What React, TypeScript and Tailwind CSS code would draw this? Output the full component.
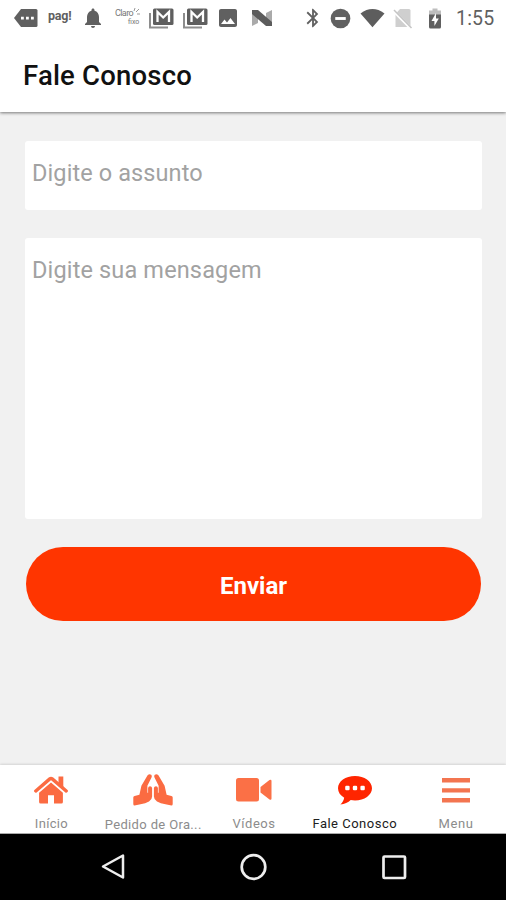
import React from "react";
import { MdBluetooth, MdNotifications, MdImage } from "react-icons/md";

function GmailIcon() {
  return (
    <svg width="25" height="21" viewBox="0 0 25 21" className="shrink-0">
      <path d="M1 5V19.5H19" fill="none" stroke="#8d8d8d" strokeWidth="2" />
      <rect x="4" y="0.5" width="20.5" height="16.5" rx="1.5" fill="#5f5f5f" />
      <path d="M8.5 14V4L14.2 9.5L20 4V14" fill="none" stroke="#fff" strokeWidth="2.3" />
    </svg>
  );
}

function StatusBar() {
  return (
    <div className="flex h-9 shrink-0 items-center pl-[14px] text-[#606060]">
      <svg width="24" height="20" viewBox="0 0 24 20" className="shrink-0">
        <path d="M7 1H22Q23.5 1 23.5 2.5V17.5Q23.5 19 22 19H7L0 10Z" fill="#606060" />
        <path d="M7 8.8h2.8v2.8H7zM12 8.8h2.8v2.8H12zM17 8.8h2.8v2.8H17z" fill="#fff" />
      </svg>
      <span className="-mt-1 ml-[10px] w-[25px] whitespace-nowrap text-[12.5px] leading-none font-bold tracking-[-0.2px]">pag!</span>
      <MdNotifications className="ml-[8px] h-6 w-6 shrink-0 text-[#606060]" />
      <div className="relative ml-[10px] h-5 w-[26px] shrink-0 text-[#777]">
        <span className="absolute top-[1px] left-0 text-[9px] leading-none tracking-[-0.6px]">Claro</span>
        <span className="absolute top-[11px] left-[13px] text-[7px] leading-none">fixo</span>
        <svg width="8" height="8" viewBox="0 0 8 8" className="absolute top-0 left-[18px]">
          <path d="M1 3L2 0M3 4L6 1M4 6H7" stroke="#999" fill="none" />
        </svg>
      </div>
      <div className="ml-[8px] flex gap-[9px]">
        <GmailIcon />
        <GmailIcon />
      </div>
      <MdImage className="ml-[8px] h-6 w-6 shrink-0" />
      <svg width="22" height="18" viewBox="0 0 22 18" className="ml-[11px] shrink-0">
        <path d="M1 4L7 1V14L1 17ZM15 4L21 1V14L15 17Z" fill="#aaa" />
        <path d="M1 1H7L21 13V17H15L1 5Z" fill="#5c5c5c" />
      </svg>
      <MdBluetooth className="ml-[29px] h-[22px] w-[22px] shrink-0" />
      <svg width="21" height="21" viewBox="0 0 22 22" className="ml-[6px] shrink-0">
        <circle cx="11" cy="11" r="10.3" fill="#606060" />
        <rect x="5.5" y="9.5" width="11" height="3" fill="#fff" />
      </svg>
      <svg width="25" height="20" viewBox="0 0 26 20" className="ml-[9px] shrink-0">
        <path d="M0.5 5.2Q13 -3.8 25.5 5.2L13 19.5Z" fill="#5d5d5d" />
      </svg>
      <svg width="20" height="21" viewBox="0 0 20 21" className="ml-[8px] shrink-0">
        <path d="M7 1H16Q17.5 1 17.5 2.5V19H2.5V6Z" fill="#cfcfcf" />
        <path d="M0 2.5L18.5 21" stroke="#fff" strokeWidth="3" />
        <path d="M1 2L18.5 20" stroke="#c5c5c5" strokeWidth="1.5" />
      </svg>
      <svg width="14" height="21" viewBox="0 0 14 21" className="ml-[15px] shrink-0">
        <path d="M4.5 0.5H9.5V2.5H13V7H1V2.5H4.5Z" fill="#bebebe" />
        <path d="M1 6.5H13V19Q13 20.5 11.5 20.5H2.5Q1 20.5 1 19Z" fill="#606060" />
        <path d="M8 5L3.5 13H6.4V18L10.8 10.5H8Z" fill="#fff" />
      </svg>
      <span className="ml-[14px] pt-[2px] text-[19.5px] leading-none tracking-[0.2px]">1:55</span>
    </div>
  );
}

function HouseIcon() {
  return (
    <svg width="34" height="28" viewBox="0 0 34 28" className="mr-[2px]">
      <path d="M1.8 15L15.8 2.9Q17 1.9 18.2 2.9L32.2 15" fill="none" stroke="currentColor" strokeWidth="3.4" strokeLinecap="round" strokeLinejoin="round" />
      <path d="M24.5 0.5H29.3V12L24.5 8Z" fill="currentColor" />
      <path d="M17 6.5L28.9 16.8V26Q28.9 27.5 27.4 27.5H20V19.3H14V27.5H6.6Q5.1 27.5 5.1 26V16.8Z" fill="currentColor" />
    </svg>
  );
}

function HandsIcon() {
  return (
    <svg width="40" height="32" viewBox="0 0 40 32">
      <g fill="currentColor">
        <path id="hand" d="M14.6 1.2Q16.4 -0.6 18.2 0.8Q19.2 1.8 18.5 3.4L14.4 11.8V18.7H15.1V14Q15.3 12.2 17 12.2Q18.9 12.2 19.1 14V22.5Q19.1 25.6 16 27.5Q12.5 29.8 7.5 30.2L1.6 31.5Q0.3 31.5 0.3 30V23.4Q0.3 22.1 1.6 21.9L6.4 20.8L8.4 11.8Z" />
        <use href="#hand" transform="translate(40 0) scale(-1 1)" />
      </g>
    </svg>
  );
}

function VideoIcon() {
  return (
    <svg width="36" height="24" viewBox="0 0 36 24">
      <rect x="0" y="0" width="23" height="23.5" rx="2.5" fill="#fb7046" />
      <path d="M24.5 9L33.5 2Q35.5 1 35.5 3V20.5Q35.5 22.5 33.5 21.5L24.5 14.5Z" fill="#fb7046" />
    </svg>
  );
}

function ChatIcon() {
  return (
    <svg width="34" height="29" viewBox="0 0 34 29">
      <path d="M17 0C7.5 0 0 5.3 0 12.2C0 16.2 2.4 19.4 6.2 21.7C5.8 24.3 4.6 26.2 2.4 28.5C6.6 28.2 10.2 26.5 12.7 24C14 24.3 15.5 24.4 17 24.4C26.4 24.4 34 19 34 12.2C34 5.3 26.4 0 17 0Z" fill="#ff2500" />
      <g fill="#fff">
        <rect x="7.2" y="9.8" width="4.4" height="4.4" rx="1.2" />
        <rect x="14.8" y="9.8" width="4.4" height="4.4" rx="1.2" />
        <rect x="22.4" y="9.8" width="4.4" height="4.4" rx="1.2" />
      </g>
    </svg>
  );
}

function MenuIcon() {
  return (
    <svg width="28" height="25" viewBox="0 0 28 25">
      <path d="M0 0H28V4.6H0ZM0 10.2H28V14.4H0ZM0 20H28V24.6H0Z" fill="#f37550" />
    </svg>
  );
}

const tabs = [
  { label: "Início", icon: <HouseIcon />, text: "pr-[2px] tracking-[0.3px]" },
  { label: "Pedido de Ora...", icon: <HandsIcon />, text: "pt-px tracking-[0.35px]" },
  { label: "Vídeos", icon: <VideoIcon />, text: "tracking-[0.5px]" },
  { label: "Fale Conosco", icon: <ChatIcon />, text: "tracking-[0.5px]", active: true },
  { label: "Menu", icon: <MenuIcon />, text: "pl-px tracking-[0.6px]" },
];

export default function App() {
  return (
    <div className="flex h-[900px] w-[506px] flex-col overflow-hidden bg-[#f1f1f1] font-[Roboto,sans-serif]">
      <header className="z-10 flex h-[112px] shrink-0 flex-col bg-white shadow-[0_1px_3px_rgba(0,0,0,0.5)]">
        <StatusBar />
        <h1 className="pt-[21px] pl-[23px] text-[27.5px] leading-[38px] font-medium tracking-[0.2px] text-[#111]">Fale Conosco</h1>
      </header>
      <main className="flex flex-1 flex-col pt-[29px] pr-[24px] pl-[25px]">
        <input
          type="text"
          placeholder="Digite o assunto"
          className="h-[69px] shrink-0 rounded-[3px] bg-white px-[7px] pb-[6px] text-[23.5px] tracking-[0.1px] outline-none placeholder:text-[#a2a2a2]"
        />
        <textarea
          placeholder="Digite sua mensagem"
          className="mt-7 h-[281px] shrink-0 resize-none rounded-[3px] bg-white px-[7px] pt-[18px] text-[23.5px] leading-7 tracking-[0.15px] outline-none placeholder:text-[#a2a2a2]"
        />
        <button className="mx-px mt-7 h-[74px] shrink-0 rounded-full bg-[#ff3500] pt-[3px] text-[24px] font-bold text-white">Enviar</button>
      </main>
      <nav className="grid h-[69px] shrink-0 grid-cols-5 border-b border-[#aaa] bg-white pl-[2px] shadow-[0_-1px_2px_rgba(0,0,0,0.12)]">
        {tabs.map((tab) => (
          <div key={tab.label} className="flex flex-col items-center pt-[6px]">
            <div className="flex h-[38px] items-center text-[#fb6b42]">{tab.icon}</div>
            <span className={`${tab.text} mt-[5px] text-[13px] leading-[20px] whitespace-nowrap ${tab.active ? "text-[#202020]" : "text-[#8c8c8c]"}`}>{tab.label}</span>
          </div>
        ))}
      </nav>
      <footer className="flex h-[66px] shrink-0 items-center bg-black pl-[101px]">
        <svg width="24" height="28" viewBox="0 0 24 28">
          <path d="M22 2.5V24.5L2 13.5Z" fill="none" stroke="#eee" strokeWidth="2.5" strokeLinejoin="round" />
        </svg>
        <svg width="28" height="28" viewBox="0 0 28 28" className="ml-[114px]">
          <circle cx="14.5" cy="14" r="11.8" fill="none" stroke="#eee" strokeWidth="2.7" />
        </svg>
        <svg width="26" height="26" viewBox="0 0 26 26" className="ml-[114px]">
          <rect x="2.5" y="2.5" width="21.5" height="21.5" rx="1" fill="none" stroke="#eee" strokeWidth="2.7" />
        </svg>
      </footer>
    </div>
  );
}
